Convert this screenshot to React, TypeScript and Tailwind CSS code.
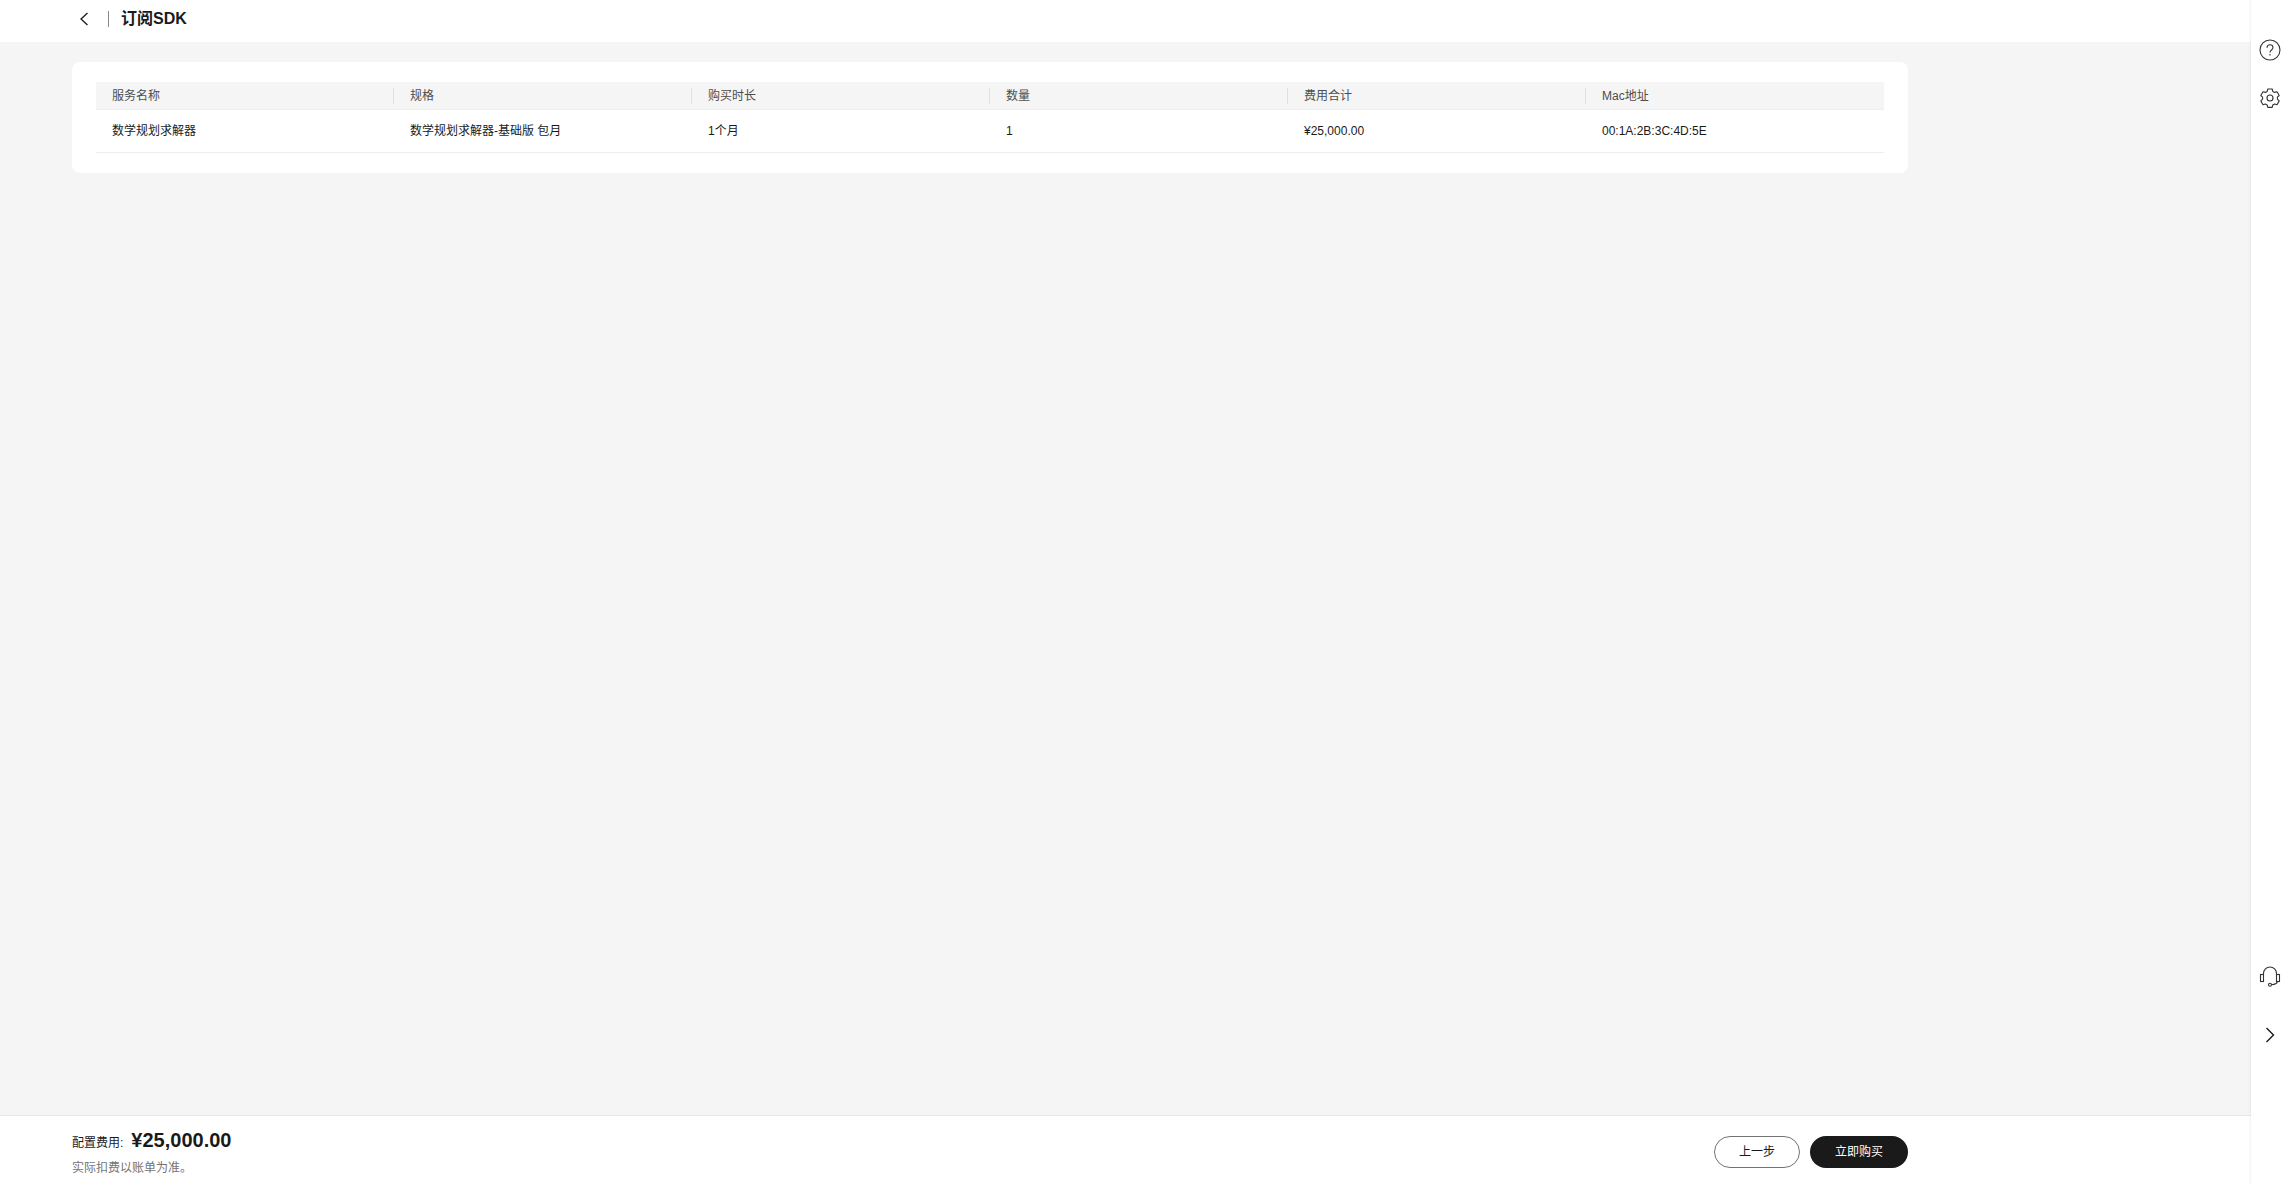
const columns = ["服务名称", "规格", "购买时长", "数量", "费用合计", "Mac地址"];
const row = ["数学规划求解器", "数学规划求解器-基础版 包月", "1个月", "1", "¥25,000.00", "00:1A:2B:3C:4D:5E"];

function ChevronLeft() {
  return (
    <svg width="16" height="16" viewBox="0 0 16 16" fill="none" stroke="#1a1a1a" strokeWidth="1.3">
      <path d="M11.500 2 5 8l6.500 6" />
    </svg>
  );
}

function ChevronRight() {
  return (
    <svg width="16" height="16" viewBox="0 0 16 16" fill="none" stroke="#1a1a1a" strokeWidth="1.4">
      <path d="M4.500 1 11.500 8l-7 7" />
    </svg>
  );
}

function HelpIcon() {
  return (
    <svg width="22" height="22" viewBox="0 0 22 22" fill="none" stroke="#333" strokeWidth="1.1">
      <circle cx="11" cy="11" r="10" />
      <path d="M8 8.800C8 7 9.300 5.800 11 5.800s3 1.100 3 2.800c0 2.400-3 2.400-3 4.800" />
      <path d="M11 15v1.500" />
    </svg>
  );
}

function GearIcon() {
  return (
    <svg width="22" height="22" viewBox="0 0 22 22" fill="none" stroke="#333" strokeWidth="1.1" strokeLinejoin="round">
      <path d="M8.800 2h4.400l.6 2.400 1.800 1 2.400-.7 2.200 3.800-1.800 1.700v2l1.800 1.700-2.200 3.800-2.400-.7-1.800 1-.6 2.400H8.800l-.6-2.400-1.800-1-2.400.7-2.200-3.800 1.800-1.700v-2L1.800 8.500 4 4.700l2.400.7 1.800-1z" />
      <circle cx="11" cy="11" r="3" />
    </svg>
  );
}

function HeadsetIcon() {
  return (
    <svg width="22" height="22" viewBox="0 0 22 22" fill="none" stroke="#333" strokeWidth="1.1">
      <path d="M4.500 8.500v-1a6.500 6.500 0 0 1 13 0v1" />
      <rect x="1.500" y="8.500" width="3" height="7" />
      <rect x="17.500" y="8.500" width="3" height="7" />
      <path d="M18.500 15.500c-.5 2-3 3-6 3.200" />
      <circle cx="11" cy="18.700" r="1.500" />
    </svg>
  );
}

export default function App() {
  return (
    <div className="flex h-screen w-full overflow-hidden bg-[#f5f5f5] font-['Liberation_Sans','Noto_Sans_CJK_SC',sans-serif] text-[#1a1a1a]">
      <div className="flex min-w-0 flex-1 flex-col">
        <header className="flex h-[42px] shrink-0 items-center bg-white pb-[4px] pl-[76px]">
          <ChevronLeft />
          <span className="ml-[16px] h-[16px] w-px bg-[#888]" />
          <h1 className="ml-[12px] text-[16px] font-bold leading-none">订阅SDK</h1>
        </header>

        <main className="flex-1 px-[72px] pt-[20px] pr-[343px]">
          <section className="rounded-[8px] bg-white px-[24px] pt-[20px] pb-[20px]">
            <div className="grid h-[28px] grid-cols-6 items-center border-b border-[#eeeeee] bg-[#f5f5f5] text-[12px] font-normal text-[#4d4d4d]">
              {columns.map((name, i) => (
                <div key={name} className={`flex h-[16px] items-center pl-[16px] ${i > 0 ? "-ml-px border-l border-[#dfdfdf]" : ""}`}>
                  {name}
                </div>
              ))}
            </div>
            <div className="grid h-[43px] grid-cols-6 items-center border-b border-[#eeeeee] text-[12px]">
              {row.map((value) => (
                <div key={value} className="px-[16px]">
                  {value}
                </div>
              ))}
            </div>
          </section>
        </main>

        <footer className="flex h-[70px] shrink-0 items-center justify-between border-t border-[#e6e6e6] bg-white pt-[2px] pr-[343px] pl-[72px]">
          <div>
            <div className="flex items-baseline">
              <span className="text-[12px]">配置费用:</span>
              <span className="ml-[8px] text-[20px] font-bold leading-[24px]">¥25,000.00</span>
            </div>
            <p className="mt-[8px] text-[12px] leading-[16px] text-[#737373]">实际扣费以账单为准。</p>
          </div>
          <div className="flex gap-[10px]">
            <button className="h-[32px] w-[86px] rounded-full border border-[#737373] bg-white text-[12px]">上一步</button>
            <button className="h-[32px] w-[98px] rounded-full bg-[#1a1a1a] text-[12px] text-white">立即购买</button>
          </div>
        </footer>
      </div>

      <aside className="flex w-[33px] shrink-0 flex-col justify-between bg-white pt-[39px] pb-[142px] pl-[8px] shadow-[-1px_0_2px_rgba(0,0,0,0.06)]">
        <div className="flex w-[22px] flex-col items-center gap-[26px]">
          <HelpIcon />
          <GearIcon />
        </div>
        <div className="flex w-[22px] flex-col items-center gap-[39px]">
          <HeadsetIcon />
          <ChevronRight />
        </div>
      </aside>
    </div>
  );
}
